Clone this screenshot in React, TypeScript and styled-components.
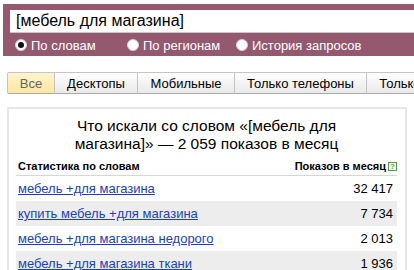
import React from "react";
import styled, { createGlobalStyle } from "styled-components";

const GlobalStyle = createGlobalStyle`
  html, body {
    margin: 0;
    padding: 0;
    background: #fff;
    font-family: "Liberation Sans", Arial, sans-serif;
    overflow: hidden;
  }
`;

const Page = styled.div`
  width: 414px;
  height: 270px;
  padding: 4px 0 0 3px;
  box-sizing: border-box;
  overflow: hidden;
`;

const Header = styled.div`
  background: #94586f;
  height: 52px;
  box-sizing: border-box;
  padding: 6px 0 0 7px;
`;

const SearchBox = styled.div`
  background: #fff;
  height: 23px;
  box-sizing: border-box;
  border-bottom: 1px solid #c8c8c8;
  padding-left: 6px;
  font-size: 16px;
  line-height: 22px;
  color: #000;
  white-space: nowrap;
`;

const RadioRow = styled.div`
  display: flex;
  align-items: center;
  height: 22px;
  margin-top: 1px;
  padding-left: 5px;
`;

const RadioItem = styled.label<{ $w?: number }>`
  display: flex;
  align-items: center;
  gap: 4px;
  width: ${(p) => (p.$w ? `${p.$w}px` : "auto")};
  flex: 0 0 auto;
  color: #fff;
  font-size: 13px;
  white-space: nowrap;
`;

const RadioDot = styled.span<{ $checked?: boolean }>`
  width: 12px;
  height: 12px;
  border-radius: 50%;
  background: #fff;
  box-sizing: border-box;
  border: 1px solid #d8d0d4;
  display: flex;
  align-items: center;
  justify-content: center;
  &::after {
    content: "";
    display: ${(p) => (p.$checked ? "block" : "none")};
    width: 6px;
    height: 6px;
    border-radius: 50%;
    background: #111;
  }
`;

const Tabs = styled.div`
  display: flex;
  margin: 16px 0 0 4px;
  height: 22px;
`;

const Tab = styled.div<{ $active?: boolean; $w: number }>`
  flex: 0 0 auto;
  width: ${(p) => p.$w}px;
  box-sizing: border-box;
  height: 22px;
  display: flex;
  align-items: center;
  justify-content: center;
  font-size: 13px;
  white-space: nowrap;
  border: 1px solid #c4c4c4;
  border-left-width: ${(p) => (p.$active ? 1 : 0)}px;
  border-bottom-color: #a8a8a8;
  border-radius: ${(p) => (p.$active ? "2px 0 0 2px" : "0")};
  color: ${(p) => (p.$active ? "#666" : "#000")};
  background: ${(p) =>
    p.$active
      ? "linear-gradient(#fff4cc, #fde6a3)"
      : "linear-gradient(#ffffff, #e9e9e9)"};
`;

const Panel = styled.div`
  margin: 13px 0 0 4px;
  width: 400px;
  height: 200px;
  box-sizing: border-box;
  border: 2px solid #e6e6e6;
  border-bottom: none;
  padding: 0 8px 0 7px;
`;

const Title = styled.div`
  text-align: center;
  font-size: 15.5px;
  line-height: 18px;
  color: #000;
  padding: 8px 48px 0;
  height: 48px;
  box-sizing: border-box;
`;

const HeadRow = styled.div`
  display: flex;
  justify-content: space-between;
  align-items: center;
  height: 18px;
  border-bottom: 1px solid #d6d6d6;
  padding: 0 0 0 2px;
  font-size: 11px;
  font-weight: bold;
  color: #000;
`;

const HeadRight = styled.span`
  display: flex;
  align-items: center;
  gap: 2px;
`;

const HelpBox = styled.span`
  width: 9px;
  height: 9px;
  box-sizing: border-box;
  border: 1px solid #4f9a3a;
  color: #4f9a3a;
  font-size: 8px;
  line-height: 7px;
  text-align: center;
  font-weight: bold;
`;

const Row = styled.div<{ $odd?: boolean }>`
  display: flex;
  justify-content: space-between;
  align-items: center;
  height: 25px;
  padding: 0 4px 0 2px;
  background: ${(p) => (p.$odd ? "#ededed" : "#fff")};
  font-size: 13px;
`;

const Phrase = styled.a`
  color: #1a3dc1;
  text-decoration: underline;
  white-space: nowrap;
`;

const Count = styled.span`
  color: #000;
`;

const tabs = [
  { label: "Все", w: 48, active: true },
  { label: "Десктопы", w: 83 },
  { label: "Мобильные", w: 97 },
  { label: "Только телефоны", w: 132 },
  { label: "Только планшеты", w: 132 },
];

const rows = [
  { phrase: "мебель +для магазина", count: "32 417" },
  { phrase: "купить мебель +для магазина", count: "7 734" },
  { phrase: "мебель +для магазина недорого", count: "2 013" },
  { phrase: "мебель +для магазина ткани", count: "1 936" },
];

export default function App() {
  return (
    <Page>
      <GlobalStyle />
      <Header>
        <SearchBox>[мебель для магазина]</SearchBox>
        <RadioRow>
          <RadioItem $w={112}>
            <RadioDot $checked />
            По словам
          </RadioItem>
          <RadioItem $w={109}>
            <RadioDot />
            По регионам
          </RadioItem>
          <RadioItem>
            <RadioDot />
            История запросов
          </RadioItem>
        </RadioRow>
      </Header>
      <Tabs>
        {tabs.map((t) => (
          <Tab key={t.label} $active={t.active} $w={t.w}>
            {t.label}
          </Tab>
        ))}
      </Tabs>
      <Panel>
        <Title>
          Что искали со словом «[мебель для магазина]» — 2 059 показов в месяц
        </Title>
        <HeadRow>
          <span>Статистика по словам</span>
          <HeadRight>
            Показов в месяц
            <HelpBox>?</HelpBox>
          </HeadRight>
        </HeadRow>
        {rows.map((r, i) => (
          <Row key={r.phrase} $odd={i % 2 === 1}>
            <Phrase href="#">{r.phrase}</Phrase>
            <Count>{r.count}</Count>
          </Row>
        ))}
      </Panel>
    </Page>
  );
}
